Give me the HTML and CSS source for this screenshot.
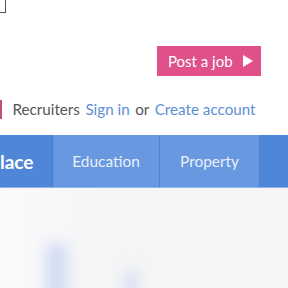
FILE: index.html
```html
<!DOCTYPE html>
<html>
<head>
<meta charset="utf-8">
<link rel="stylesheet" href="styles.css">
</head>
<body>
<div class="page">
  <div class="corner"></div>
  <div class="actions">
    <a class="post-btn" href="#">Post a job <span class="tri"></span></a>
  </div>
  <div class="recruiters">
    <span class="bar"></span>
    <span class="label">Recruiters</span>
    <a class="link" href="#">Sign in</a>
    <span class="label">or</span>
    <a class="link" href="#">Create account</a>
  </div>
  <nav class="nav">
    <div class="tab tab-main">lace</div>
    <div class="tab tab-light">Education</div>
    <div class="tab tab-light">Property</div>
    <div class="tab tab-rest"></div>
  </nav>
  <div class="hero">
    <div class="blob b1"></div>
    <div class="blob b2"></div>
  </div>
</div>
</body>
</html>
```

FILE: styles.css
```css
html, body {
  margin: 0;
  padding: 0;
  background: #ffffff;
}
.page {
  width: 288px;
  height: 288px;
  overflow: hidden;
  font-family: Lato, "Open Sans", sans-serif;
}
.corner {
  width: 5px;
  height: 12px;
  border-right: 1px solid #555;
  border-bottom: 1px solid #555;
}
.actions {
  display: flex;
  padding-left: 157px;
  margin-top: 33px;
  height: 30px;
}
.post-btn {
  display: flex;
  align-items: center;
  width: 104px;
  height: 30px;
  box-sizing: border-box;
  padding-left: 11px;
  background: #e0508a;
  color: #fff;
  font-size: 15px;
  text-decoration: none;
  gap: 10px;
}
.tri {
  width: 0;
  height: 0;
  border-left: 10px solid #fff;
  border-top: 6px solid transparent;
  border-bottom: 6px solid transparent;
}
.recruiters {
  display: flex;
  align-items: center;
  height: 20px;
  margin-top: 23px;
  font-size: 15.2px;
  gap: 5.5px;
}
.bar {
  width: 2px;
  height: 19px;
  background: #c0507a;
  margin-right: 5px;
}
.label {
  color: #555555;
}
.link {
  color: #5b8fd6;
  text-decoration: none;
}
.nav {
  display: flex;
  margin-top: 16px;
  height: 53px;
  background: #4f86d8;
  border-bottom: 1px solid #8fb2e8;
  box-sizing: border-box;
}
.tab {
  display: flex;
  align-items: center;
  justify-content: center;
  height: 100%;
  font-size: 15.4px;
  color: #e8effb;
}
.tab-main {
  width: 53px;
  justify-content: flex-start;
  box-sizing: border-box;
  font-weight: 700;
  font-size: 19px;
  color: #fff;
  background: #4f86d8;
  border-right: 1px solid #4679c8;
}
.tab-light {
  width: 107px;
  background: #6898e0;
  border-right: 1px solid #4f82cf;
  box-sizing: border-box;
}
.tab-light + .tab-light {
  width: 100px;
}
.tab-rest {
  flex: 1;
  background: #4f86d8;
}
.hero {
  position: relative;
  height: 100px;
  background: linear-gradient(90deg, #fafafc 0%, #f5f5f6 40%, #f5f5f5 100%);
}
.blob {
  position: absolute;
  background: #d0dbf3;
  filter: blur(7px);
  border-radius: 8px;
}
.b1 {
  left: 46px;
  top: 55px;
  width: 22px;
  height: 70px;
}
.b2 {
  left: 125px;
  top: 82px;
  width: 12px;
  height: 40px;
  background: #d3ddf3;
}
```
